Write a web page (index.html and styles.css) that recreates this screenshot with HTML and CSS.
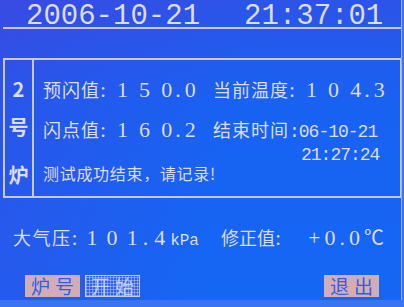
FILE: index.html
```html
<!DOCTYPE html>
<html lang="zh-CN">
<head>
    <meta charset="UTF-8">
    <meta name="viewport" content="width=device-width, initial-scale=1.0">
    <title>闪点测试</title>
    <link rel="stylesheet" href="styles.css">
</head>
<body>
    <div class="screen">
        <div class="clock">
            <span class="date">2006-10-21</span>
            <span class="time">21:37:01</span>
        </div>

        <div class="panel">
            <div class="furnace">
                <div class="f1">2</div>
                <div class="f2">号</div>
                <div class="f3">炉</div>
            </div>
            <div class="data">
                <div class="cell r1"><span class="lbl">预闪值</span><span class="num">:15<span class="pre">0</span><span class="dot">.</span>0</span></div>
                <div class="cell r1"><span class="lbl">当前温度</span><span class="num">:10<span class="pre">4</span><span class="dot">.</span>3</span></div>
                <div class="cell r2"><span class="lbl">闪点值</span><span class="num">:16<span class="pre">0</span><span class="dot">.</span>2</span></div>
                <div class="cell r2"><span class="lbl">结束时间</span><span class="small">:06-10-21</span></div>
                <div class="cell msg">测试成功结束，请记录!</div>
                <div class="cell time2">21:27:24</div>
            </div>
        </div>

        <div class="pressure">
            <span class="lbl wide">大气压</span><span class="num tight">:10<span class="pre">1</span><span class="dot">.</span><span class="last">4</span></span><span class="unit">kPa</span>
            <span class="lbl fix">修正值</span><span class="colon">:</span><span class="num2">+0.0</span><span class="deg">℃</span>
        </div>

        <div class="keys">
            <div class="key">炉号</div>
            <div class="key on">开始</div>
            <div class="key quit">退出</div>
        </div>
    </div>
</body>
</html>
```
FILE: styles.css
```css
body {
    margin: 0;
    width: 404px;
    height: 307px;
    overflow: hidden;
    background: #3a74f2;
}
.screen {
    width: 401px;
    height: 300px;
    color: #dcdcf4;
    font-family: "Noto Sans CJK SC", sans-serif;
    background:
        linear-gradient(100deg, rgba(90, 50, 210, 0.28), rgba(90, 50, 210, 0) 55%),
        linear-gradient(#2c54e8, #1862f2 35%, #1666f4);
    box-shadow: 1px 0 0 #9cb0f2;
    overflow: hidden;
}

/* top clock */
.clock {
    display: flex;
    height: 29px;
    box-sizing: border-box;
    margin-left: 3px;
    padding: 6px 0 0 23px;
    line-height: 21px;
    font-family: "Liberation Mono", monospace;
    font-size: 29px;
    white-space: nowrap;
    border-bottom: 2px solid #c8c8ee;
}
.time {
    margin-left: 44px;
}

/* framed box */
.panel {
    display: flex;
    margin: 29px 0 0 3px;
    width: 399px;
    height: 140px;
    box-sizing: border-box;
    border: 2px solid #c8c8ee;
}
.furnace {
    width: 27px;
    padding-top: 11px;
    border-right: 2px solid #c8c8ee;
    font-size: 20px;
    font-weight: bold;
    text-align: center;
}
.f1 { line-height: 36px; }
.f2 { line-height: 40px; }
.f3 { line-height: 56px; }

.data {
    flex: 1;
    display: grid;
    grid-template-columns: 170px 1fr;
    grid-template-rows: 38px 38px 34px;
    padding: 10px 0 0 9px;
    font-size: 18px;
    white-space: nowrap;
}
.cell { line-height: 38px; }
.cell.r2 {
    padding-top: 4px;
    line-height: 34px;
}
.lbl {
    letter-spacing: 1px;
}
.num {
    font-family: "Liberation Serif", serif;
    font-size: 22px;
    letter-spacing: 11px;
}
.pre { letter-spacing: 3px; }
.dot { letter-spacing: 4px; }
.small {
    font-family: "Liberation Mono", monospace;
    font-size: 18px;
    letter-spacing: -1px;
}
.msg {
    grid-column: 1;
    grid-row: 3;
    align-self: end;
    margin-bottom: -3px;
    font-size: 16px;
    line-height: 20px;
    letter-spacing: 0.7px;
}
.time2 {
    grid-column: 2;
    grid-row: 3;
    align-self: start;
    padding-left: 88px;
    font-family: "Liberation Mono", monospace;
    font-size: 18px;
    line-height: 18px;
    letter-spacing: -1px;
}

/* pressure line */
.pressure {
    display: flex;
    align-items: baseline;
    height: 30px;
    margin-top: 24px;
    padding-left: 13px;
    font-size: 18px;
    line-height: 30px;
    white-space: nowrap;
}
.lbl.wide { letter-spacing: 1.5px; }
.num.tight { letter-spacing: 9px; }
.num.tight .pre { letter-spacing: 5px; }
.num.tight .dot { letter-spacing: 6px; }
.num.tight .last { letter-spacing: 5px; }
.unit {
    font-family: "Liberation Mono", monospace;
    font-size: 16px;
}
.lbl.fix {
    margin-left: 22px;
    letter-spacing: 0;
}
.colon {
    font-family: "Liberation Serif", serif;
    font-size: 22px;
}
.num2 {
    margin-left: 27px;
    font-family: "Liberation Serif", serif;
    font-size: 22px;
    letter-spacing: 4px;
}
.deg {
    font-size: 20px;
}

/* soft keys */
.keys {
    display: flex;
    gap: 5px;
    margin-top: 23px;
    padding: 0 22px 0 25px;
}
.key {
    width: 55px;
    height: 22px;
    line-height: 22px;
    text-align: center;
    font-size: 19px;
    letter-spacing: 5px;
    text-indent: 5px;
    color: #2c5ee6;
    background: #d3adb6;
}
.key.on {
    color: #c4d0fa;
    box-sizing: border-box;
    border: 1px solid #c8c8ee;
    line-height: 20px;
    background:
        repeating-linear-gradient(90deg, rgba(210, 210, 250, 0.45) 0 1px, transparent 1px 3px),
        repeating-linear-gradient(0deg, rgba(210, 210, 250, 0.45) 0 1px, transparent 1px 3px),
        #2a62ee;
}
.key.quit {
    margin-left: auto;
}
```
